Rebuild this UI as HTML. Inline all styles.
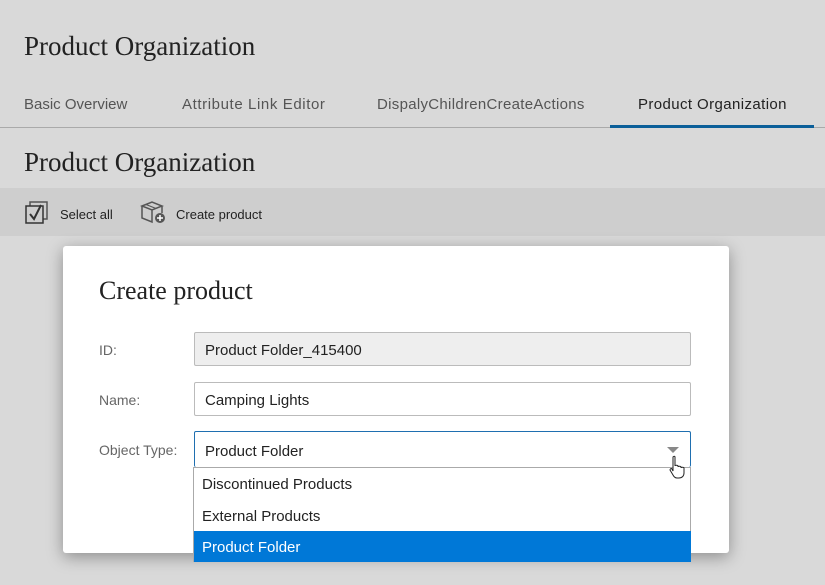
<!DOCTYPE html>
<html><head><style>
body{margin:0;width:825px;height:585px;background:#d9d9d9;font-family:"Liberation Sans",sans-serif;position:relative;overflow:hidden}
.a{position:absolute;white-space:nowrap}
.serif{font-family:"Liberation Serif",serif;color:#222}
.tab{font-size:15px;color:#555;top:96px;letter-spacing:0.3px}
.in{position:absolute;left:194px;width:497px;height:34px;border:1px solid #bbb;border-radius:2px;box-sizing:border-box;font-size:15px;color:#222;padding:9px 10px 0;background:#fff}
.lab{font-size:14px;color:#666;left:99px}
.opt{position:absolute;left:0;width:497px;height:31px;font-size:15px;color:#222;padding:8px 8px 0;box-sizing:border-box}
</style></head><body>
<div class="a serif" style="left:24px;top:31px;font-size:27px">Product Organization</div>
<div class="a tab" style="left:24px;letter-spacing:0">Basic Overview</div>
<div class="a tab" style="left:182px;letter-spacing:0.6px">Attribute Link Editor</div>
<div class="a tab" style="left:377px">DispalyChildrenCreateActions</div>
<div class="a tab" style="left:638px;color:#222;letter-spacing:0.4px">Product Organization</div>
<div class="a" style="left:0;top:127px;width:825px;height:1px;background:#aaa"></div>
<div class="a" style="left:610px;top:125px;width:204px;height:3px;background:#0b5f99"></div>
<div class="a serif" style="left:24px;top:147px;font-size:27px">Product Organization</div>
<div class="a" style="left:0;top:188px;width:825px;height:48px;background:#cecece"></div>
<svg class="a" style="left:25px;top:201px" width="25" height="24" viewBox="0 0 25 24"><rect x="5" y="1" width="17" height="17" fill="none" stroke="#555" stroke-width="1.5"/><rect x="1" y="5" width="17" height="17" fill="#cecece" stroke="#333" stroke-width="1.5"/><path d="M5 13l4 5 7-14" fill="none" stroke="#333" stroke-width="2"/></svg>
<div class="a" style="left:60px;top:207px;font-size:13px;color:#222">Select all</div>
<svg class="a" style="left:140px;top:200px" width="28" height="26" viewBox="0 0 28 26"><path d="M2 6l10-4 10 4-10 4z M2 6v12l10 4V10 M22 6v7" fill="none" stroke="#555" stroke-width="1.5"/><path d="M6 4.5l10 4" stroke="#555" stroke-width="1.2"/><circle cx="20" cy="18" r="5" fill="#555"/><path d="M20 15v6M17 18h6" stroke="#fff" stroke-width="1.5"/></svg>
<div class="a" style="left:176px;top:207px;font-size:13px;color:#222">Create product</div>
<div class="a" style="left:63px;top:246px;width:666px;height:307px;background:#fff;border-radius:3px;box-shadow:0 4px 16px rgba(0,0,0,.35)"></div>
<div class="a serif" style="left:99px;top:276px;font-size:26px">Create product</div>
<div class="a lab" style="top:342px">ID:</div>
<div class="in" style="top:332px;background:#eee">Product Folder_415400</div>
<div class="a lab" style="top:392px">Name:</div>
<div class="in" style="top:382px">Camping Lights</div>
<div class="a lab" style="top:442px">Object Type:</div>
<div class="in" style="top:431px;border-color:#1f6fb0;border-bottom:none;height:36px;padding-top:11px">Product Folder</div>
<svg class="a" style="left:667px;top:447px" width="12" height="8"><path d="M0 0h12L6 6z" fill="#888"/></svg>
<div class="a" style="left:193px;top:467px;width:498px;height:95px;background:#fff;border:1px solid #aaa;box-sizing:border-box">
<div class="opt" style="top:0">Discontinued Products</div>
<div class="opt" style="top:32px">External Products</div>
<div class="opt" style="top:63px;background:#0078d7;color:#fff">Product Folder</div>
</div>
<svg class="a" style="left:668px;top:455px" width="18" height="24" viewBox="0 0 18 24"><path d="M5 2c1-1 2-1 2 0v9c0-1 3-1 3 0v1c0-1 3-1 3 0v1c0-1 3-1 3 0v5c0 3-2 5-5 5H9c-2 0-3-1-4-3l-3-5c0-1 1-2 2-1l1 2z" fill="#fff" stroke="#222" stroke-width="1"/></svg>
</body></html>
